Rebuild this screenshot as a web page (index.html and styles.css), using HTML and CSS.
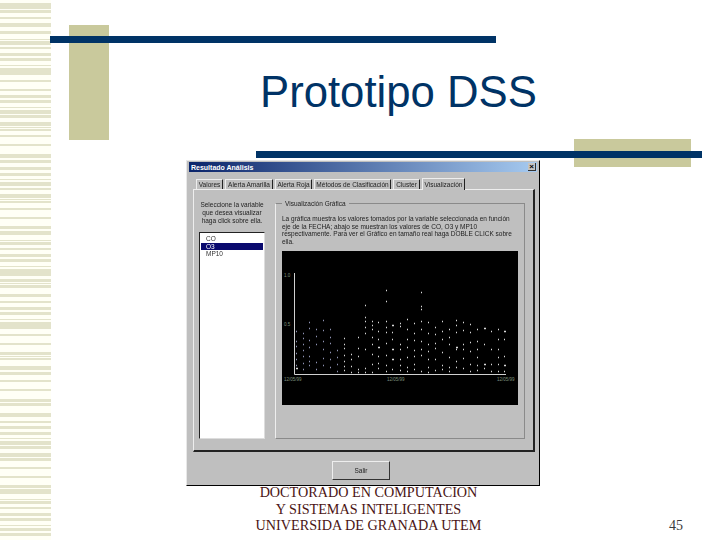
FILE: index.html
```html
<!DOCTYPE html>
<html lang="es">
<head>
<meta charset="utf-8">
<title>Prototipo DSS</title>
<link rel="stylesheet" href="styles.css">
</head>
<body>
<div class="slide">
  <svg class="stripes" viewBox="0 0 51 540" width="51" height="540" aria-hidden="true"><path fill="#e3e3cb" d="M0 3h51v5H0zM0 8h51v1H0zM0 10h51v3H0zM0 17h51v2H0zM0 23h51v4H0zM0 31h51v3H0zM0 39h51v1H0zM0 41h51v4H0zM0 47h51v2H0zM0 53h51v3H0zM0 58h51v3H0zM0 65h51v1H0zM0 68h51v7H0zM0 80h51v2H0zM0 89h51v2H0zM0 95h51v3H0zM0 100h51v3H0zM0 107h51v1H0zM0 110h51v4H0zM0 115h51v3H0zM0 122h51v4H0zM0 127h51v1H0zM0 129h51v2H0zM0 135h51v2H0zM0 144h51v2H0zM0 154h51v4H0zM0 160h51v3H0zM0 167h51v3H0zM0 173h51v3H0zM0 179h51v1H0zM0 182h51v4H0zM0 188h51v2H0zM0 194h51v4H0zM0 199h51v1H0zM0 201h51v2H0zM0 208h51v2H0zM0 217h51v2H0zM0 226h51v3H0zM0 231h51v4H0zM0 240h51v1H0zM0 242h51v3H0zM0 248h51v2H0zM0 254h51v3H0zM0 259h51v3H0zM0 266h51v1H0zM0 269h51v7H0zM0 279h51v3H0zM0 283h51v1H0zM0 285h51v3H0zM0 294h51v3H0zM0 301h51v2H0zM0 307h51v3H0zM0 312h51v3H0zM0 319h51v1H0zM0 322h51v7H0zM0 334h51v2H0zM0 343h51v2H0zM0 352h51v3H0zM0 356h51v1H0zM0 358h51v2H0zM0 366h51v4H0zM0 372h51v1H0zM0 373h51v2H0zM0 380h51v2H0zM0 389h51v2H0zM0 399h51v3H0zM0 403h51v3H0zM0 413h51v4H0zM0 421h51v2H0zM0 426h51v3H0zM0 432h51v3H0zM0 438h51v1H0zM0 441h51v4H0zM0 446h51v3H0zM0 453h51v4H0zM0 458h51v1H0zM0 459h51v2H0zM0 467h51v2H0zM0 476h51v2H0zM0 485h51v3H0zM0 489h51v1H0zM0 490h51v4H0zM0 499h51v1H0zM0 501h51v3H0zM0 507h51v2H0zM0 513h51v3H0zM0 518h51v3H0zM0 525h51v1H0zM0 528h51v3H0zM0 533h51v3H0z"/></svg>
  <div class="block block-top"></div>
  <div class="rule rule-top"></div>
  <div class="block block-right"></div>
  <div class="rule rule-right"></div>

  <h1 class="title">Prototipo DSS</h1>

  <div class="dialog">
    <div class="titlebar">
      <span class="titlebar-text">Resultado Análisis</span>
      <span class="close">×</span>
    </div>
    <div class="tabs">
      <span class="tab tab-1">Valores</span>
      <span class="tab tab-2">Alerta Amarilla</span>
      <span class="tab tab-3">Alerta Roja</span>
      <span class="tab tab-4">Métodos de Clasificación</span>
      <span class="tab tab-5">Cluster</span>
      <span class="tab tab-6 active">Visualización</span>
    </div>
    <div class="pane">
      <div class="side">
        <p class="side-text">Seleccione la variable<br>que desea visualizar<br>haga click sobre ella.</p>
        <ul class="list">
          <li>CO</li>
          <li class="selected">O3</li>
          <li>MP10</li>
        </ul>
      </div>
      <div class="group">
        <span class="legend">Visualización Gráfica</span>
        <p class="group-text">La gráfica muestra los valores tomados por la variable seleccionada en función<br>eje de la FECHA; abajo se muestran los valores de CO, O3 y MP10<br>respectivamente. Para ver el Gráfico en tamaño real haga DOBLE CLICK sobre<br>ella.</p>
        <svg class="chart" viewBox="282 252 236 154" width="236" height="154" role="img" aria-label="Gráfica de dispersión">
          <rect x="282" y="252" width="236" height="154" fill="#000"/>
          <path class="axis" d="M294.5 274V375.5H506"/>
          <path class="dots dim-blue" d="M296 332h1M296 342h1M296 347h1M296 354h1M296 360h1M296 366h1M303 334h1M303 339h1M303 345h1M303 351h1M303 357h1M303 364h1M303 370h1M309 323h1M309 329h1M309 341h1M309 348h1M309 357h1M309 362h1M309 366h1M316 330h1M316 337h1M316 345h1M316 363h1M316 370h1M323 321h1M323 331h1M323 342h1M323 350h1M323 359h1M323 366h1M330 330h1M330 338h1M330 344h1M330 353h1M330 360h1M330 368h1M337 351h1M337 358h1M337 365h1M337 372h1"/>
          <path class="dots" d="M296 369h2M344 339h1M344 345h1M344 349h1M344 356h1M344 362h1M344 367h1M344 371h1M351 355h1M351 360h1M351 367h1M351 373h1M358 338h1M358 349h1M358 357h1M358 370h1M358 373h1M365 306h1M365 318h1M365 322h1M365 328h1M365 334h1M365 350h1M365 369h1M365 373h1M372 322h1M372 326h1M372 330h1M372 338h1M372 345h1M372 355h1M372 365h1M372 373h1M378 323h1M378 332h1M378 340h1M378 348h2M378 357h1M378 364h1M378 369h1M386 291h1M386 302h1M386 322h1M386 328h1M386 333h1M386 344h1M386 356h1M386 366h1M386 372h1M392 326h2M392 333h1M392 340h1M392 350h2M392 360h2M392 370h1M400 324h1M400 327h1M400 345h1M400 350h1M400 360h1M400 366h1M400 371h1M407 320h1M407 330h1M407 340h1M407 348h1M407 358h1M407 368h1M407 372h1M414 324h1M414 334h1M414 341h1M414 351h1M414 357h1M414 365h1M414 370h1M421 293h1M421 307h1M421 310h1M421 322h1M421 330h1M421 342h1M421 350h1M421 356h1M421 372h1M428 323h1M428 334h1M428 345h1M428 352h1M428 360h1M428 368h1M428 373h1M435 328h1M435 335h1M435 344h1M435 349h1M435 360h1M435 371h1M442 322h1M442 332h1M442 340h1M442 353h1M442 366h1M442 370h1M449 330h1M449 338h1M449 345h1M449 358h1M449 368h1M449 372h1M456 321h1M456 326h1M456 333h1M456 348h2M456 350h1M456 362h1M456 368h1M463 323h1M463 331h1M463 345h1M463 350h1M463 359h1M463 369h1M470 325h1M470 333h1M470 343h1M470 352h1M470 365h1M470 372h1M477 330h1M477 342h1M477 350h1M477 358h1M477 366h1M477 371h1M484 329h2M484 345h1M484 365h2M484 369h1M491 332h1M491 350h1M491 365h1M491 372h1M498 330h1M498 340h1M498 350h1M498 358h1M498 365h1M498 372h1M504 332h2M504 340h1M504 357h1M504 366h2M504 372h1"/>
          <text class="tick" x="284" y="278">1.0</text>
          <text class="tick" x="284" y="327">0.5</text>
          <text class="tick" x="284" y="382">12/05/99</text>
          <text class="tick" x="387" y="382">12/05/99</text>
          <text class="tick" x="497" y="382">12/05/99</text>
        </svg>
      </div>
    </div>
    <div class="actions">
      <button class="exit" type="button">Salir</button>
    </div>
  </div>

  <div class="footer">
    <p class="credit">DOCTORADO EN COMPUTACION<br>Y SISTEMAS INTELIGENTES<br>UNIVERSIDA DE GRANADA UTEM</p>
    <span class="page">45</span>
  </div>
</div>
</body>
</html>
```
FILE: styles.css
```css
html, body {
  margin: 0;
  padding: 0;
  background: #fff;
}

.slide {
  position: relative;
  width: 720px;
  height: 540px;
  overflow: hidden;
  background: #fff;
  font-family: "Liberation Sans", Arial, sans-serif;
}

.stripes {
  position: absolute;
  left: 0;
  top: 0;
  background: #fffff6;
}

.block {
  position: absolute;
  background: #c9c99c;
}

.block-top {
  left: 69px;
  top: 25px;
  width: 40px;
  height: 115px;
}

.block-right {
  left: 574px;
  top: 139px;
  width: 117px;
  height: 28px;
}

.rule {
  position: absolute;
  height: 7px;
  background: #003366;
}

.rule-top {
  left: 50px;
  top: 36px;
  width: 446px;
}

.rule-right {
  left: 256px;
  top: 151px;
  width: 446px;
}

.title {
  position: relative;
  box-sizing: border-box;
  margin: 0;
  padding: 67px 0 0 260px;
  height: 160px;
  font-size: 43.7px;
  line-height: 50px;
  font-weight: 400;
  color: #003366;
  white-space: nowrap;
}

.dialog {
  position: relative;
  display: flex;
  flex-direction: column;
  box-sizing: border-box;
  width: 354px;
  height: 326px;
  margin-left: 186px;
  padding: 2px;
  background: #bfbfbf;
  border-right: 1px solid #000;
  border-bottom: 1px solid #000;
  border-left: 1px solid #e8e8e8;
  border-top: 1px solid #e8e8e8;
  color: #222;
  font-size: 6.5px;
}

.titlebar {
  display: flex;
  align-items: center;
  justify-content: space-between;
  flex: none;
  height: 10px;
  margin-top: -1px;
  padding: 0 1px 0 2px;
  background: linear-gradient(90deg, #0a246a, #a6caf0);
  color: #fff;
  font-size: 7px;
  font-weight: 700;
}

.close {
  display: flex;
  align-items: center;
  justify-content: center;
  width: 8px;
  height: 8px;
  background: #c4c4c4;
  border-right: 1px solid #333;
  border-bottom: 1px solid #333;
  box-sizing: border-box;
  color: #000;
  font-size: 8px;
  line-height: 8px;
}

.tabs {
  display: flex;
  flex: none;
  align-items: flex-end;
  height: 17px;
  padding-left: 7px;
}

.tab {
  box-sizing: border-box;
  display: flex;
  align-items: center;
  justify-content: center;
  height: 10px;
  margin-right: 2px;
  border-left: 1px solid #eee;
  border-top: 1px solid #eee;
  border-right: 1px solid #222;
  white-space: nowrap;
  filter: blur(0.45px);
}

.tab-1 { width: 27px; }
.tab-2 { width: 48px; }
.tab-3 { width: 37px; }
.tab-4 { width: 77px; }
.tab-5 { width: 27px; margin-right: 2px; }
.tab-6 { width: 43px; }

.tab.active {
  height: 12px;
  margin-bottom: -1px;
  background: #bfbfbf;
  position: relative;
}

.pane {
  display: flex;
  flex: none;
  gap: 10px;
  box-sizing: border-box;
  height: 263px;
  width: 342px;
  margin-left: 4px;
  padding: 11px 8px 11px 5px;
  border-left: 1px solid #eee;
  border-top: 1px solid #eee;
  border-right: 2px solid #222;
  border-bottom: 2px solid #222;
}

.side {
  display: flex;
  flex-direction: column;
  width: 68px;
}

.side-text {
  margin: 0;
  height: 31px;
  line-height: 8px;
  text-align: center;
  filter: blur(0.45px);
}

.list {
  flex: 1;
  margin: 0;
  padding: 2px 1px;
  list-style: none;
  background: #fff;
  border-left: 1px solid #222;
  border-top: 1px solid #222;
  border-right: 1px solid #ddd;
  border-bottom: 1px solid #ddd;
}

.list li {
  height: 7.5px;
  padding-left: 5px;
  line-height: 7.5px;
  color: #333;
  filter: blur(0.3px);
}

.list .selected {
  background: #0a0a6e;
  color: #fff;
}

.group {
  position: relative;
  box-sizing: border-box;
  width: 250px;
  height: 236px;
  margin-top: 2px;
  padding: 11px 6px 0 6px;
  border: 1px solid #8a8a8a;
  border-left-color: #eee;
}

.legend {
  position: absolute;
  left: 6px;
  top: -4px;
  padding: 0 3px;
  background: #bfbfbf;
  line-height: 8px;
  filter: blur(0.45px);
}

.group-text {
  margin: 0 0 5px;
  height: 31px;
  line-height: 7.6px;
  white-space: nowrap;
  filter: blur(0.45px);
}

.chart {
  display: block;
}

.axis {
  fill: none;
  stroke: #d0d0d0;
  stroke-width: 1;
}

.dots {
  fill: none;
  stroke: #d8d8d8;
  stroke-width: 1.4;
  transform: translateY(0.5px);
}

.dim-blue {
  stroke: #8f93b4;
}

.tick {
  font-size: 4.5px;
  fill: #7e907e;
}

.actions {
  display: flex;
  flex: 1;
  align-items: flex-start;
  justify-content: center;
  padding: 9px 4px 0 0;
}

.exit {
  box-sizing: border-box;
  width: 58px;
  height: 19px;
  padding: 0;
  background: #bfbfbf;
  border: 1px solid #333;
  border-left-color: #eee;
  border-top-color: #eee;
  color: #222;
  font: 6.5px "Liberation Sans", Arial, sans-serif;
  filter: blur(0.45px);
}

.footer {
  position: relative;
  display: flex;
  align-items: flex-start;
  box-sizing: border-box;
  width: 720px;
  height: 54px;
}

.credit {
  flex: none;
  width: 737px;
  height: 50px;
  margin: -2px -737px 0 0;
  font-family: "Liberation Serif", "Times New Roman", serif;
  font-size: 14.2px;
  line-height: 16.5px;
  text-align: center;
  color: #4a1414;
}

.page {
  margin: 32px 0 0 669px;
  font-family: "Liberation Serif", "Times New Roman", serif;
  font-size: 14px;
  line-height: 16px;
  color: #3a3a3a;
}
```
